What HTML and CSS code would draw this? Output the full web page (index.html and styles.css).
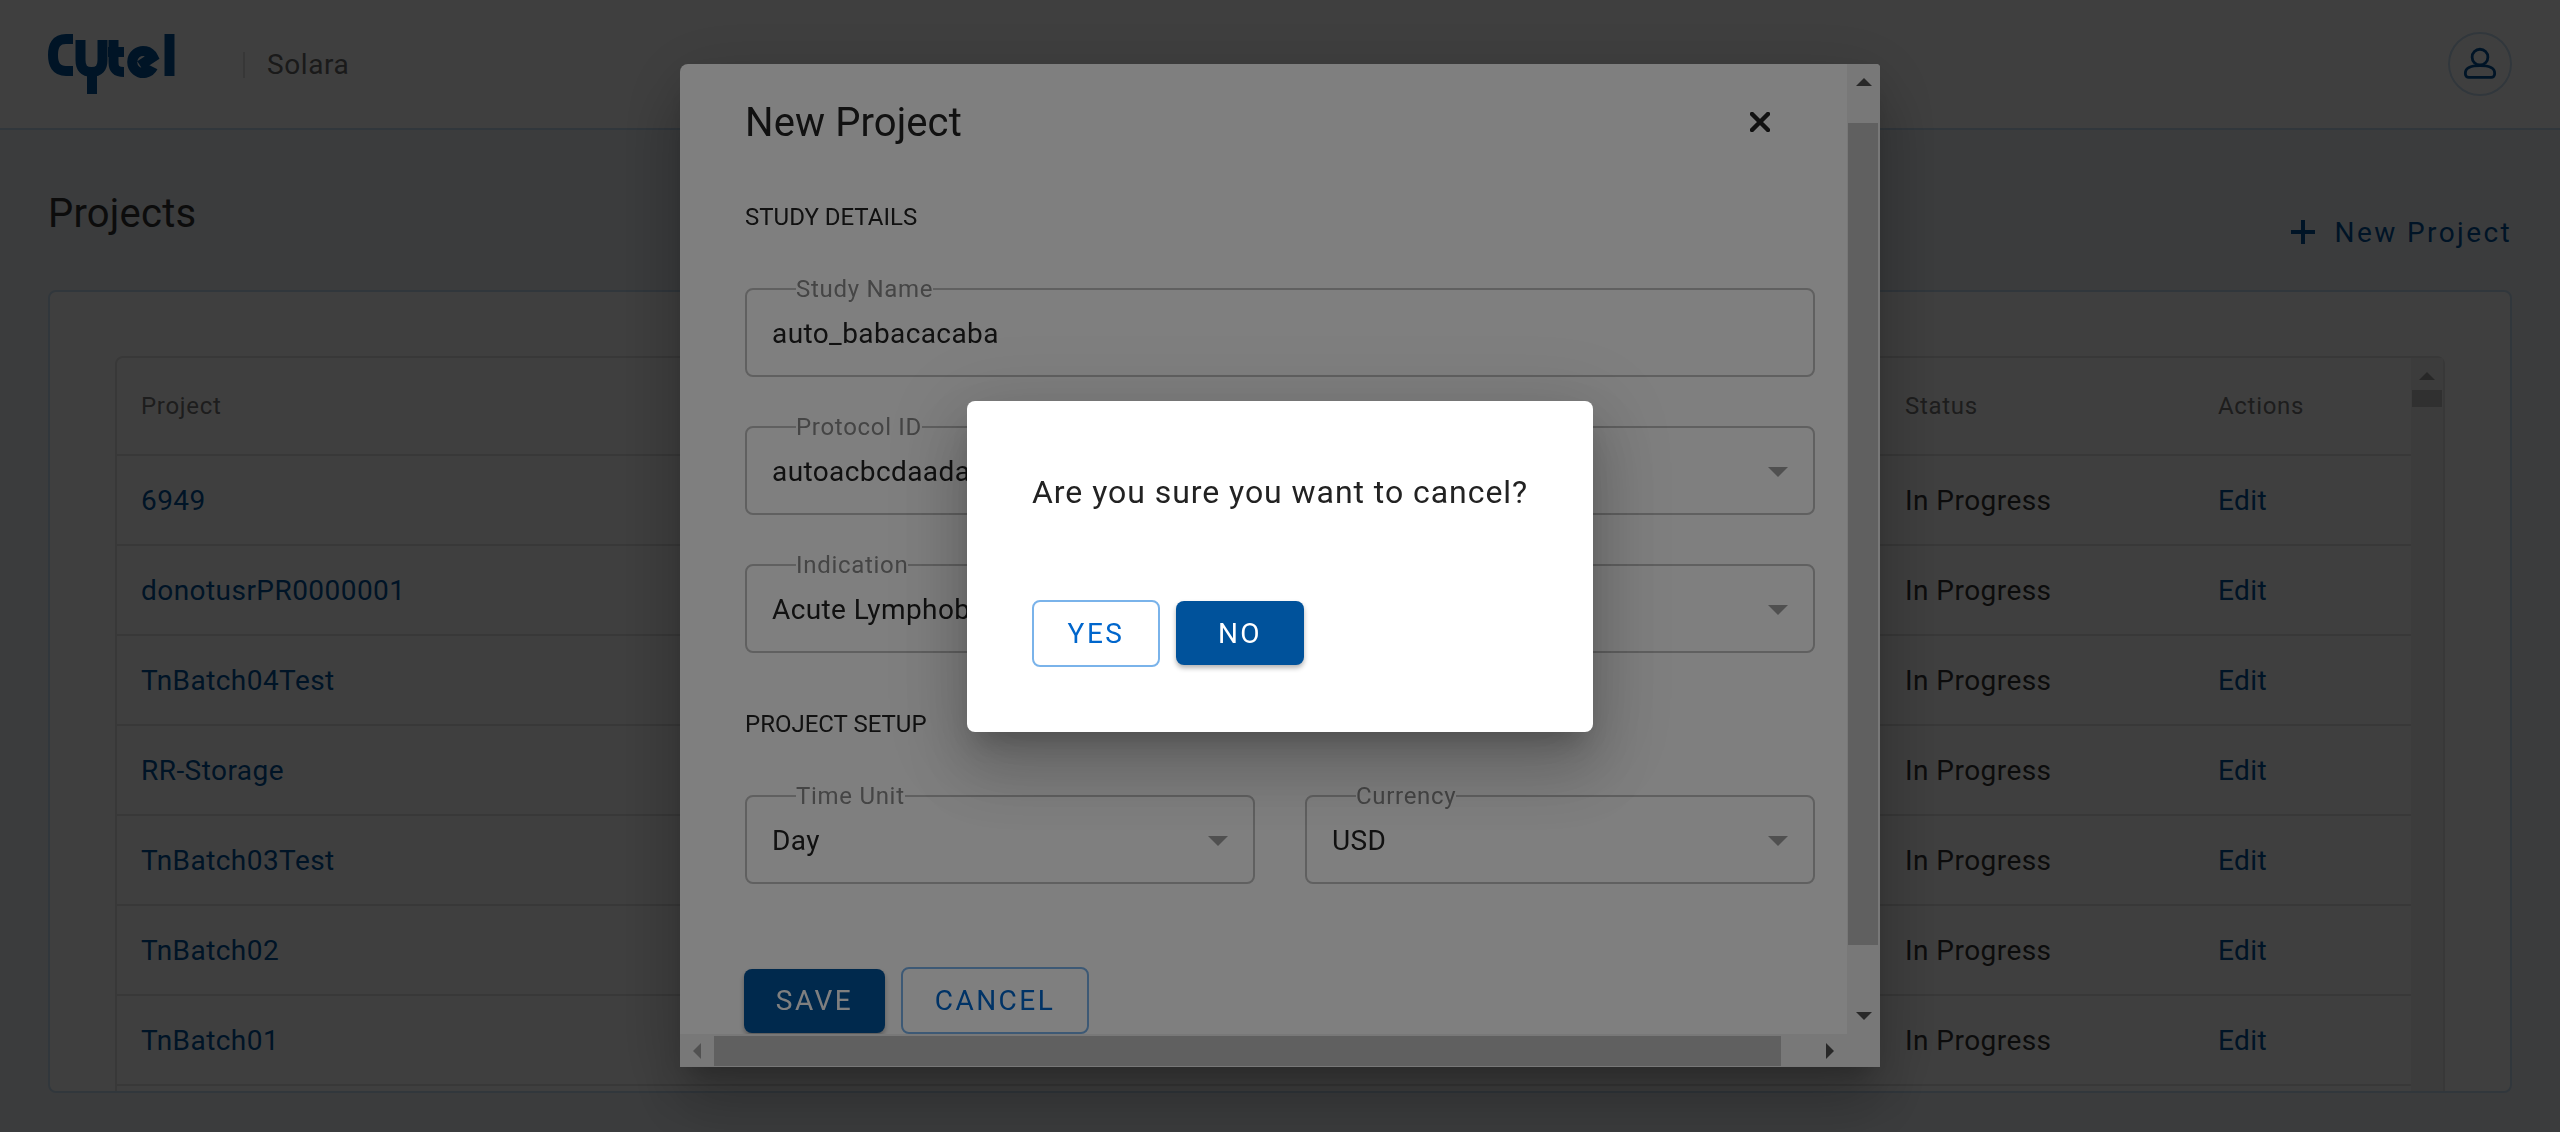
FILE: index.html
```html
<!DOCTYPE html>
<html lang="en">
<head>
    <meta charset="UTF-8">
    <meta name="viewport" content="width=device-width, initial-scale=1.0">
    <title>Solara - Projects</title>
    <link rel="stylesheet" href="styles.css">
</head>
<body>

    <header class="topbar">
        <svg class="logo" viewBox="0 0 136 70" aria-label="Cytel">
            <path d="M29 11 H22 C12 11 9 18 9 27 C9 36 12 43 22 43 H29"/>
            <path d="M36.500 12 V32 C36.500 40 40 44 47.500 44 C55 44 58.500 40 58.500 32 V12"/>
            <path d="M48 42 V66"/>
            <path d="M69.500 12 V34 C69.500 41 72 44 80 44"/>
            <path d="M64 24 H80"/>
            <path d="M109 39 A11 11 0 1 1 109 29 L96 37.500"/>
            <path d="M125.500 6 V48"/>
        </svg>
        <span class="divider"></span>
        <span class="app-name">Solara</span>
        <span class="user-btn">
            <svg viewBox="0 0 32 32" class="user-icon">
                <circle cx="16" cy="9" r="7"/>
                <path d="M6 27 H26 A3 3 0 0 0 29 24 V23 C29 18 24 16.500 16 16.500 C8 16.500 3 18 3 23 V24 A3 3 0 0 0 6 27 Z"/>
            </svg>
        </span>
    </header>

    <main class="page">
        <div class="title-row">
            <h1>Projects</h1>
            <a class="new-project">
                <svg viewBox="0 0 24 24" class="plus-icon"><path d="M12 0 V24 M0 12 H24"/></svg>
                New Project
            </a>
        </div>

        <div class="card">
            <div class="table-wrap">
                <table>
                    <colgroup>
                        <col>
                        <col class="col-status">
                        <col class="col-actions">
                    </colgroup>
                    <thead>
                        <tr>
                            <th>Project</th>
                            <th>Status</th>
                            <th>Actions</th>
                        </tr>
                    </thead>
                    <tbody>
                        <tr><td><a>6949</a></td><td>In Progress</td><td><a>Edit</a></td></tr>
                        <tr><td><a>donotusrPR0000001</a></td><td>In Progress</td><td><a>Edit</a></td></tr>
                        <tr><td><a>TnBatch04Test</a></td><td>In Progress</td><td><a>Edit</a></td></tr>
                        <tr><td><a>RR-Storage</a></td><td>In Progress</td><td><a>Edit</a></td></tr>
                        <tr><td><a>TnBatch03Test</a></td><td>In Progress</td><td><a>Edit</a></td></tr>
                        <tr><td><a>TnBatch02</a></td><td>In Progress</td><td><a>Edit</a></td></tr>
                        <tr><td><a>TnBatch01</a></td><td>In Progress</td><td><a>Edit</a></td></tr>
                    </tbody>
                </table>
                <div class="table-scroll">
                    <span class="arrow arrow-up arrow-small"></span>
                    <span class="table-thumb"></span>
                </div>
            </div>
        </div>
    </main>

    <div class="backdrop">
        <div class="modal">
            <div class="modal-body">
                <div class="modal-head">
                    <h2>New Project</h2>
                    <svg viewBox="0 0 20 20" class="close-icon"><path d="M2 2 L18 18 M18 2 L2 18"/></svg>
                </div>

                <h3 class="section-title">STUDY DETAILS</h3>
                <fieldset class="field">
                    <legend>Study Name</legend>
                    <span class="value">auto_babacacaba</span>
                </fieldset>

                <div class="field-row">
                    <fieldset class="field">
                        <legend>Protocol ID</legend>
                        <span class="value">autoacbcdaadab</span>
                    </fieldset>
                    <fieldset class="field">
                        <legend></legend>
                        <span class="value"></span>
                        <span class="chevron"></span>
                    </fieldset>
                </div>

                <div class="field-row">
                    <fieldset class="field">
                        <legend>Indication</legend>
                        <span class="value">Acute Lymphoblastic Leukemia</span>
                    </fieldset>
                    <fieldset class="field">
                        <legend></legend>
                        <span class="value"></span>
                        <span class="chevron"></span>
                    </fieldset>
                </div>

                <h3 class="section-title section-two">PROJECT SETUP</h3>
                <div class="field-row field-row-last">
                    <fieldset class="field">
                        <legend>Time Unit</legend>
                        <span class="value">Day</span>
                        <span class="chevron"></span>
                    </fieldset>
                    <fieldset class="field">
                        <legend>Currency</legend>
                        <span class="value">USD</span>
                        <span class="chevron"></span>
                    </fieldset>
                </div>

                <div class="modal-actions">
                    <button class="btn btn-solid btn-save">SAVE</button>
                    <button class="btn btn-outline btn-cancel">CANCEL</button>
                </div>
            </div>

            <div class="vbar">
                <span class="bar-btn"><span class="arrow arrow-up"></span></span>
                <span class="vthumb"></span>
                <span class="bar-btn bar-btn-end"><span class="arrow arrow-down"></span></span>
            </div>
            <div class="hbar">
                <span class="bar-btn-h"><span class="arrow arrow-left"></span></span>
                <span class="hthumb"></span>
                <span class="bar-btn-h bar-btn-end-h"><span class="arrow arrow-right"></span></span>
            </div>
            <div class="bar-corner"></div>
        </div>
    </div>

    <div class="backdrop">
        <div class="confirm">
            <p>Are you sure you want to cancel?</p>
            <div class="confirm-actions">
                <button class="btn btn-outline">YES</button>
                <button class="btn btn-solid">NO</button>
            </div>
        </div>
    </div>

</body>
</html>
```

FILE: styles.css
```css
* {
    box-sizing: border-box;
}

html, body {
    height: 1132px;
}

body {
    margin: 0;
    overflow: hidden;
    font-family: Roboto, "Liberation Sans", sans-serif;
    background-color: #edf1f6;
    color: #333;
}

/* Top bar */
.topbar {
    display: flex;
    align-items: center;
    height: 130px;
    padding: 0 48px;
    background-color: #fff;
    border-bottom: 2px solid #c5dcf0;
}

.logo {
    width: 136px;
    height: 70px;
    margin: -2px 0 0 -4px;
    flex: none;
}

.logo path {
    fill: none;
    stroke: #00529b;
    stroke-width: 10;
}

.divider {
    width: 2px;
    height: 26px;
    margin: 2px 0 0 63px;
    background-color: #ddd;
}

.app-name {
    margin-left: 22px;
    font-size: 28px;
    letter-spacing: 0.6px;
    color: #6a6a6a;
}

.user-btn {
    display: flex;
    align-items: center;
    justify-content: center;
    width: 64px;
    height: 64px;
    margin-left: auto;
    border: 2px solid #c5dcf0;
    border-radius: 50%;
}

.user-icon {
    width: 36px;
    height: 36px;
    margin-top: 2px;
    fill: none;
    stroke: #00529b;
    stroke-width: 2.5;
}

/* Page */
.page {
    padding: 60px 48px 0;
}

.title-row {
    display: flex;
    justify-content: space-between;
    height: 100px;
}

h1 {
    margin: 0;
    font-size: 40px;
    font-weight: 400;
    line-height: 48px;
    letter-spacing: 0.2px;
    color: #333;
}

.new-project {
    display: flex;
    align-items: center;
    gap: 20px;
    height: 48px;
    margin-top: 18px;
    font-size: 28px;
    letter-spacing: 2.4px;
    color: #00529b;
}

.plus-icon {
    width: 24px;
    height: 24px;
    fill: none;
    stroke: #00529b;
    stroke-width: 4;
}

.card {
    height: 803px;
    padding: 64px 65px 0;
    overflow: hidden;
    background-color: #fff;
    border: 2px solid #c5dcf0;
    border-radius: 8px;
}

.table-wrap {
    display: flex;
    height: 800px;
    border: 2px solid #e0e0e0;
    border-radius: 8px 8px 0 0;
}

table {
    flex: 1;
    height: min-content;
    border-collapse: collapse;
    table-layout: fixed;
    font-size: 28px;
    letter-spacing: 0.45px;
}

.col-status {
    width: 313px;
}

.col-actions {
    width: 217px;
}

th, td {
    padding: 0 0 0 24px;
    text-align: left;
    border-bottom: 2px solid #e0e0e0;
    color: #333;
}

th {
    height: 97px;
    font-size: 24px;
    font-weight: 400;
    letter-spacing: 0.7px;
    color: #777;
}

td {
    height: 90px;
}

td a {
    color: #00529b;
}

.table-scroll {
    display: flex;
    flex-direction: column;
    align-items: center;
    width: 32px;
    padding-top: 14px;
    background-color: #f1f1f1;
}

.table-thumb {
    width: 30px;
    height: 17px;
    margin-top: 10px;
    background-color: #c1c1c1;
}

/* Dark layers over the page */
.backdrop {
    position: fixed;
    inset: 0;
    display: flex;
    align-items: center;
    justify-content: center;
    background-color: rgba(0, 0, 0, 0.5);
}

/* New project dialog */
.modal {
    display: grid;
    grid-template-columns: 1167px 33px;
    grid-template-rows: 970px 33px;
    width: 1200px;
    height: 1003px;
    margin-bottom: 1px;
    overflow: hidden;
    background-color: #fff;
    border-radius: 8px 4px 0 0;
    box-shadow: 0 18px 24px -11px rgba(0, 0, 0, 0.2), 0 38px 61px 5px rgba(0, 0, 0, 0.14), 0 14px 74px 13px rgba(0, 0, 0, 0.12);
}

.modal-body {
    padding: 34px 32px 0 65px;
    overflow: hidden;
}

.modal-head {
    display: flex;
    align-items: center;
    justify-content: space-between;
    height: 48px;
    padding-right: 45px;
}

h2 {
    margin: 0;
    font-size: 40px;
    font-weight: 400;
    letter-spacing: 0.1px;
    color: #222;
}

.close-icon {
    width: 20px;
    height: 20px;
    fill: none;
    stroke: #222;
    stroke-width: 4.5;
    stroke-linecap: round;
}

.section-title {
    height: 28px;
    margin: 57px 0 46px;
    font-size: 24px;
    font-weight: 400;
    line-height: 28px;
    color: #222;
}

.section-two {
    margin: 57px 0 46px;
}

.field {
    position: relative;
    display: block;
    width: 100%;
    height: 100px;
    min-width: 0;
    margin: 0;
    padding: 0 25px;
    border: 2px solid #c0c0c0;
    border-radius: 8px;
}

.field legend {
    height: 24px;
    margin-left: 24px;
    padding: 0;
    font-size: 24px;
    line-height: 24px;
    letter-spacing: 0.7px;
    color: #8a8a8a;
}

.value {
    display: block;
    margin-top: 15px;
    overflow: hidden;
    font-size: 28px;
    line-height: 36px;
    letter-spacing: 0.4px;
    white-space: nowrap;
    color: #222;
}

/* sits inside the field at its right edge */
.chevron {
    position: absolute;
    right: 25px;
    bottom: 36px;
    border-top: 10px solid #a0a0a0;
    border-left: 10px solid transparent;
    border-right: 10px solid transparent;
}

.field-row {
    display: grid;
    grid-template-columns: 510px 510px;
    gap: 50px;
    margin-top: 38px;
}

.field-row-last {
    margin-top: 0;
}

.modal-actions {
    display: flex;
    align-items: center;
    gap: 16px;
    margin: 83px 0 0 -1px;
}

/* Buttons */
.btn {
    height: 64px;
    padding: 0;
    font-family: inherit;
    font-size: 28px;
    letter-spacing: 2.5px;
    border-radius: 8px;
    cursor: pointer;
}

.btn-solid {
    width: 128px;
    color: #fff;
    background-color: #00529b;
    border: none;
    box-shadow: 0 3px 5px rgba(0, 0, 0, 0.3);
}

.btn-outline {
    width: 128px;
    height: 67px;
    color: #0066cc;
    background-color: #fff;
    border: 2px solid #7ab3ea;
}

.btn-save {
    width: 141px;
}

.btn-cancel {
    width: 188px;
}

/* Scrollbars of the dialog */
.vbar, .hbar, .bar-corner {
    background-color: #f1f1f1;
}

.vbar {
    display: flex;
    flex-direction: column;
}

.hbar {
    display: flex;
}

.bar-btn {
    display: flex;
    align-items: center;
    justify-content: center;
    height: 36px;
}

.bar-btn-end {
    margin-top: auto;
}

.bar-btn-h {
    display: flex;
    align-items: center;
    justify-content: center;
    width: 34px;
}

.bar-btn-end-h {
    margin-left: auto;
}

.vthumb {
    width: 30px;
    height: 822px;
    margin: 23px 0 0 1px;
    background-color: #c1c1c1;
}

.hthumb {
    width: 1067px;
    height: 30px;
    margin-top: 2px;
    background-color: #c1c1c1;
}

.arrow {
    width: 0;
    height: 0;
}

.arrow-up {
    border-bottom: 8px solid #505050;
    border-left: 8px solid transparent;
    border-right: 8px solid transparent;
}

.arrow-small {
    border-bottom-color: #a3a3a3;
}

.arrow-down {
    border-top: 8px solid #505050;
    border-left: 8px solid transparent;
    border-right: 8px solid transparent;
}

.arrow-left {
    border-right: 8px solid #a3a3a3;
    border-top: 8px solid transparent;
    border-bottom: 8px solid transparent;
}

.arrow-right {
    border-left: 8px solid #505050;
    border-top: 8px solid transparent;
    border-bottom: 8px solid transparent;
}

/* Confirm dialog */
.confirm {
    width: 626px;
    height: 331px;
    padding: 71px 65px 0;
    background-color: #fff;
    border-radius: 8px;
    box-shadow: 0 18px 24px -11px rgba(0, 0, 0, 0.2), 0 38px 61px 5px rgba(0, 0, 0, 0.14), 0 14px 74px 13px rgba(0, 0, 0, 0.12);
}

.confirm p {
    margin: 0;
    font-size: 32px;
    line-height: 40px;
    letter-spacing: 0.95px;
    white-space: nowrap;
    color: #222;
}

.confirm-actions {
    display: flex;
    align-items: center;
    gap: 16px;
    margin-top: 88px;
}
```
